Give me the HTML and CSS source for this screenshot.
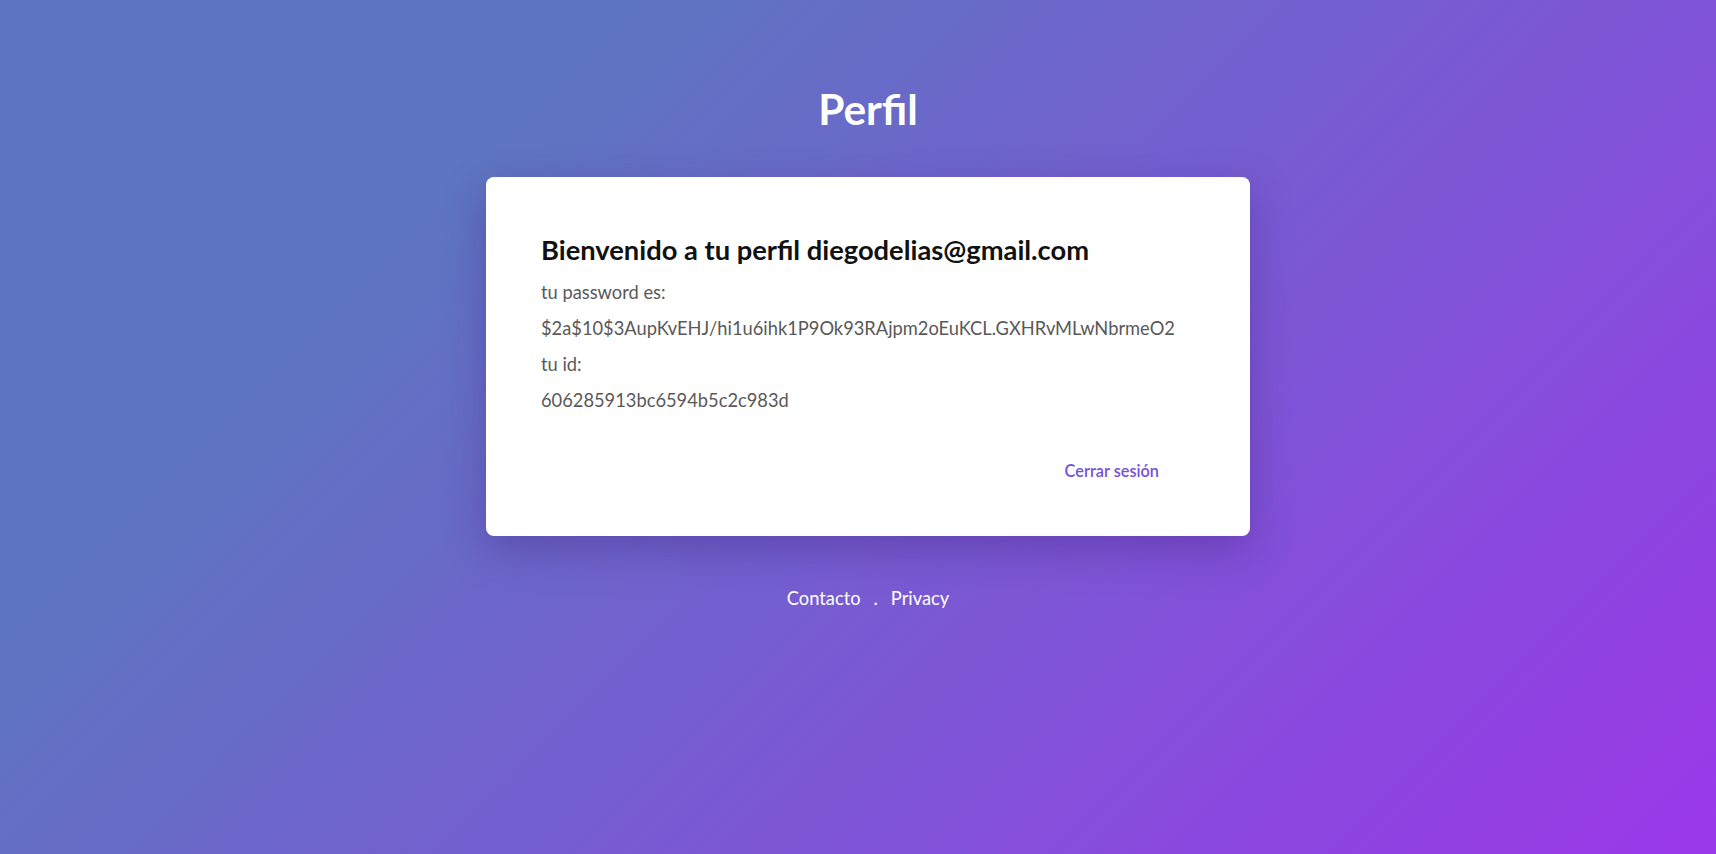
FILE: index.html
```html
<!DOCTYPE html>
<html lang="es">
<head>
<meta charset="utf-8">
<title>Perfil</title>
<link rel="stylesheet" href="styles.css">
</head>
<body>
<main class="page">
  <h1 class="title">Perfil</h1>
  <section class="card">
    <h2 class="card-title">Bienvenido a tu perfil diegodelias@gmail.com</h2>
    <p class="line">tu password es:</p>
    <p class="line">$2a$10$3AupKvEHJ/hi1u6ihk1P9Ok93RAjpm2oEuKCL.GXHRvMLwNbrmeO2</p>
    <p class="line">tu id:</p>
    <p class="line">606285913bc6594b5c2c983d</p>
    <div class="actions">
      <button class="logout" type="button">Cerrar sesión</button>
    </div>
  </section>
  <footer class="footer">
    <a class="footer-link" href="#">Contacto</a>
    <span class="dot">.</span>
    <a class="footer-link" href="#">Privacy</a>
  </footer>
</main>
</body>
</html>
```
FILE: styles.css
```css
* { box-sizing: border-box; }
html, body { margin: 0; height: 100%; }
body {
  font-family: Lato, "Open Sans", sans-serif;
  background: linear-gradient(135deg, #5e75c1 25%, #9b38e9 100%);
  min-height: 100vh;
}
.page {
  display: flex;
  flex-direction: column;
  align-items: center;
  padding-top: 85px;
  padding-left: 20px;
}
.title {
  margin: 0;
  color: #fff;
  font-size: 42.4px;
  font-weight: 700;
  line-height: 48px;
}
.card {
  margin-top: 44px;
  width: 764px;
  height: 359px;
  background: #fff;
  border-radius: 8px;
  padding: 58px 55px 0 55px;
  box-shadow: 0 14px 40px rgba(60, 30, 120, 0.35);
}
.card-title {
  margin: 0;
  font-size: 27.3px;
  font-weight: 700;
  line-height: 30px;
  color: #111;
}
.line {
  margin: 16px 0 0 0;
  font-size: 18.3px;
  line-height: 20px;
  color: #595959;
}
.line:first-of-type { margin-top: 17px; }
.actions {
  display: flex;
  justify-content: flex-end;
  margin-top: 51px;
  padding-right: 36px;
}
.logout {
  border: 0;
  background: none;
  padding: 0;
  font-family: inherit;
  font-size: 16.3px;
  font-weight: 600;
  line-height: 20px;
  color: #7650dc;
  cursor: pointer;
}
.footer {
  margin-top: 51px;
  display: flex;
  gap: 13px;
  color: #fff;
  font-size: 18.3px;
}
.footer-link { color: #fff; text-decoration: none; }
```
